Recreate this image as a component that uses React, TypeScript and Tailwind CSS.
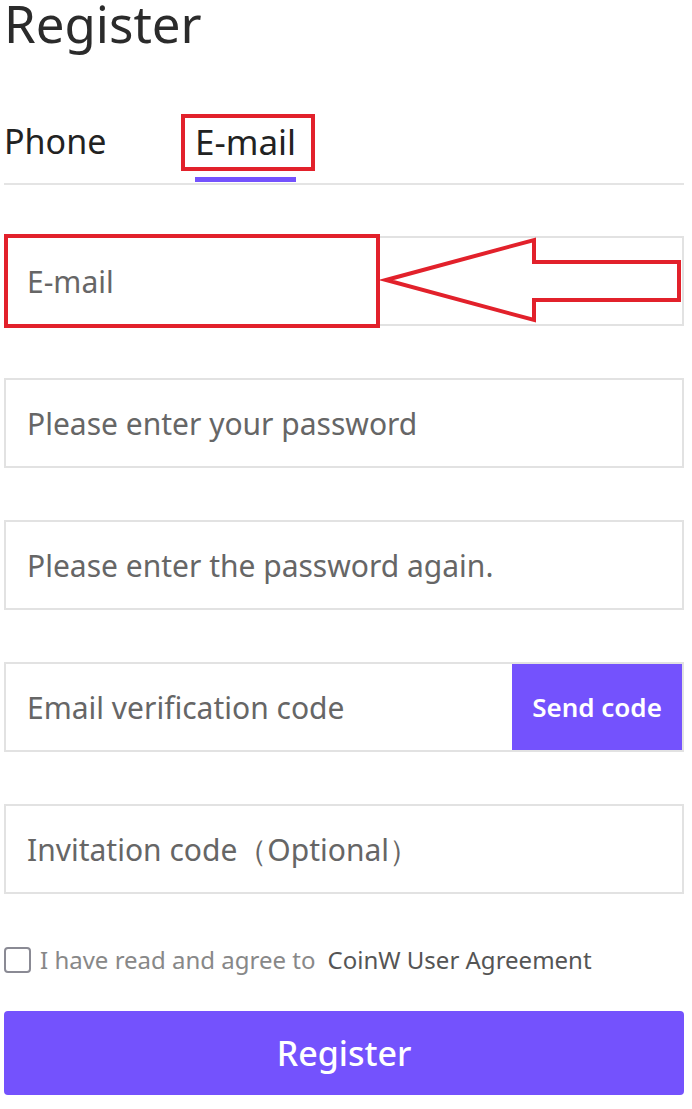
import { useState } from "react";

const fields = [
  { id: "email", placeholder: "E-mail" },
  { id: "password", placeholder: "Please enter your password" },
  { id: "confirm", placeholder: "Please enter the password again." },
];

export default function App() {
  const [tab, setTab] = useState<"phone" | "email">("email");
  const [agreed, setAgreed] = useState(false);

  return (
    <div className="relative w-[692px] h-[1109px] overflow-hidden bg-white font-['Noto_Sans','Open_Sans',sans-serif]">
      <div className="pl-[4px] pr-[8px]">
        <h1 className="text-[51px] leading-[46px] text-[#2b2b2b]">Register</h1>

        <div className="mt-[78px] flex border-b-2 border-[#e4e4e4]">
          <button onClick={() => setTab("phone")} className="w-[191px] flex flex-col items-start">
            <span className="text-[34px] leading-[35px] text-[#222]">Phone</span>
            <span className={`mt-[18px] mb-[1px] h-[5px] w-[100px] ${tab === "phone" ? "bg-[#7452fd]" : "bg-transparent"}`} />
          </button>
          <button onClick={() => setTab("email")} className="flex flex-col items-start">
            <span className="text-[35px] leading-[35px] text-[#222]">E-mail</span>
            <span className={`mt-[18px] mb-[1px] h-[5px] w-full ${tab === "email" ? "bg-[#7452fd]" : "bg-transparent"}`} />
          </button>
        </div>

        <div className="mt-[51px] flex flex-col gap-[52px]">
          {fields.map(f => (
            <div key={f.id} className="h-[90px] border-2 border-[#e2e2e2] flex items-center">
              <input
                type={f.id === "email" ? "text" : "password"}
                placeholder={f.placeholder}
                className="w-full pl-[21px] text-[30px] leading-none outline-none placeholder:text-[#666]"
              />
            </div>
          ))}

          <div className="h-[90px] border-2 border-[#e2e2e2] flex items-stretch">
            <input
              type="text"
              placeholder="Email verification code"
              className="flex-1 min-w-0 pl-[21px] text-[30px] leading-none outline-none placeholder:text-[#666]"
            />
            <button className="w-[170px] bg-[#7452fd] text-white text-[26px] font-semibold leading-none">
              Send code
            </button>
          </div>

          <div className="h-[90px] border-2 border-[#e2e2e2] flex items-center">
            <input
              type="text"
              placeholder="Invitation code（Optional）"
              className="w-full pl-[21px] text-[30px] leading-none outline-none placeholder:text-[#666]"
            />
          </div>
        </div>

        <label className="mt-[53px] flex items-center cursor-pointer" onClick={() => setAgreed(!agreed)}>
          <span className={`w-[27px] h-[26px] rounded-[4px] border-2 border-[#8a8a94] ${agreed ? "bg-[#7452fd]" : "bg-white"}`} />
          <span className="ml-[9px] text-[24px] leading-none text-[#888]">I have read and agree to</span>
          <span className="ml-[12px] text-[24px] leading-none text-[#555]">CoinW User Agreement</span>
        </label>

        <button className="mt-[38px] w-full h-[84px] rounded-[4px] bg-[#7452fd] text-white text-[34px] font-medium leading-none">
          Register
        </button>
      </div>

      {/* annotation overlays */}
      <div className="absolute left-[181px] top-[114px] w-[134px] h-[57px] border-[4px] border-[#e2212b]" />
      <div className="absolute left-[4px] top-[234px] w-[376px] h-[94px] border-[4px] border-[#e2212b]" />
      <svg className="absolute left-0 top-0" width="692" height="400" viewBox="0 0 692 400">
        <polygon
          points="386,280 534,240 534,262 679,262 679,300 534,300 534,320"
          fill="white"
          stroke="#e2212b"
          strokeWidth="4"
          strokeLinejoin="miter"
        />
      </svg>
    </div>
  );
}
